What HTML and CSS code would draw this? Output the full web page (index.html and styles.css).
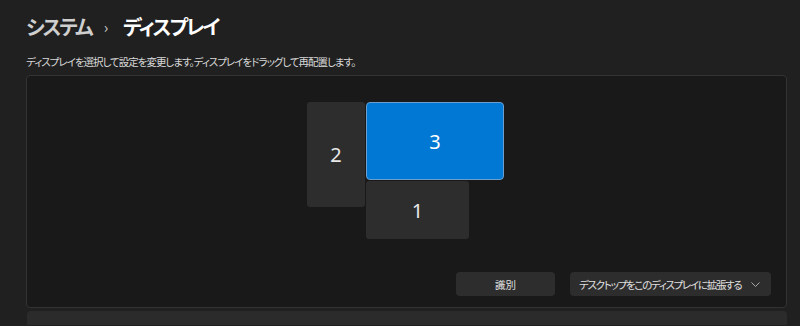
FILE: index.html
```html
<!DOCTYPE html>
<html lang="ja">
<head>
    <meta charset="UTF-8">
    <title>ディスプレイ</title>
    <link rel="stylesheet" href="styles.css">
</head>
<body>

<header class="crumbs">
    <span class="crumb-parent">システム</span>
    <span class="crumb-sep">›</span>
    <span class="crumb-current">ディスプレイ</span>
</header>

<p class="hint">ディスプレイを選択して設定を変更します。ディスプレイをドラッグして再配置します。</p>

<div class="panel">
    <div class="arrange">
        <div class="monitor m2">2</div>
        <div class="monitor m3 selected">3</div>
        <div class="monitor m1">1</div>
    </div>
    <div class="actions">
        <button class="btn identify">識別</button>
        <button class="btn select">
            <span class="select-label">デスクトップをこのディスプレイに拡張する</span>
            <svg class="chev" width="9" height="5" viewBox="0 0 9 5"><path d="M0.5 0.5l4 4 4-4" fill="none" stroke="#aaa" stroke-width="1"/></svg>
        </button>
    </div>
</div>

<div class="panel-next"></div>

</body>
</html>
```

FILE: styles.css
```css
body { margin: 0; padding: 0; background-color: #202020; color: #fff; font-family: "Noto Sans CJK JP", "Noto Sans", sans-serif; font-feature-settings: "palt"; overflow: hidden; }
.crumbs { display: flex; align-items: center; padding: 11px 26px 0; height: 30px; font-size: 20px; font-weight: 700; letter-spacing: -2px; }
.crumb-parent { color: #cfcfcf; }
.crumb-sep { color: #cfcfcf; font-size: 15px; font-weight: 400; letter-spacing: 0; margin: 0 15px 0 12px; }
.crumb-current { color: #fff; }
.hint { margin: 13px 26px 0; font-size: 10.5px; letter-spacing: -1px; color: #d8d8d8; line-height: 16px; }
.panel { margin: 5px 13px 0 26px; height: 231px; background-color: #191919; border: 1px solid #333; border-radius: 4px; display: flex; flex-direction: column; }
.arrange { position: relative; flex-grow: 1; }
.monitor { position: absolute; display: flex; align-items: center; justify-content: center; background-color: #2d2d2d; border-radius: 3px; font-family: "Noto Sans", sans-serif; font-size: 20px; color: #e8e8e8; box-sizing: border-box; }
.m2 { left: 280px; top: 26px; width: 58px; height: 105px; }
.m3 { left: 339px; top: 26px; width: 138px; height: 78px; }
.m1 { left: 339px; top: 105px; width: 103px; height: 58px; }
.selected { background-color: #0078d4; border: 1px solid #6b9fd0; border-radius: 4px; color: #fff; }
.actions { display: flex; justify-content: flex-end; gap: 15px; padding: 0 15px 11px; }
.btn { height: 24px; background-color: #2d2d2d; border: none; border-radius: 4px; color: #e0e0e0; font-family: inherit; font-feature-settings: "palt"; font-size: 10.5px; padding: 0; white-space: nowrap; }
.identify { width: 99px; }
.select { width: 201px; display: flex; align-items: center; padding: 0 0 0 9px; }
.select-label { letter-spacing: -1.3px; }
.chev { margin-left: 10px; }
.panel-next { margin: 3px 13px 0 27px; height: 14px; background-color: #2b2b2b; border-radius: 4px 4px 0 0; }
```
